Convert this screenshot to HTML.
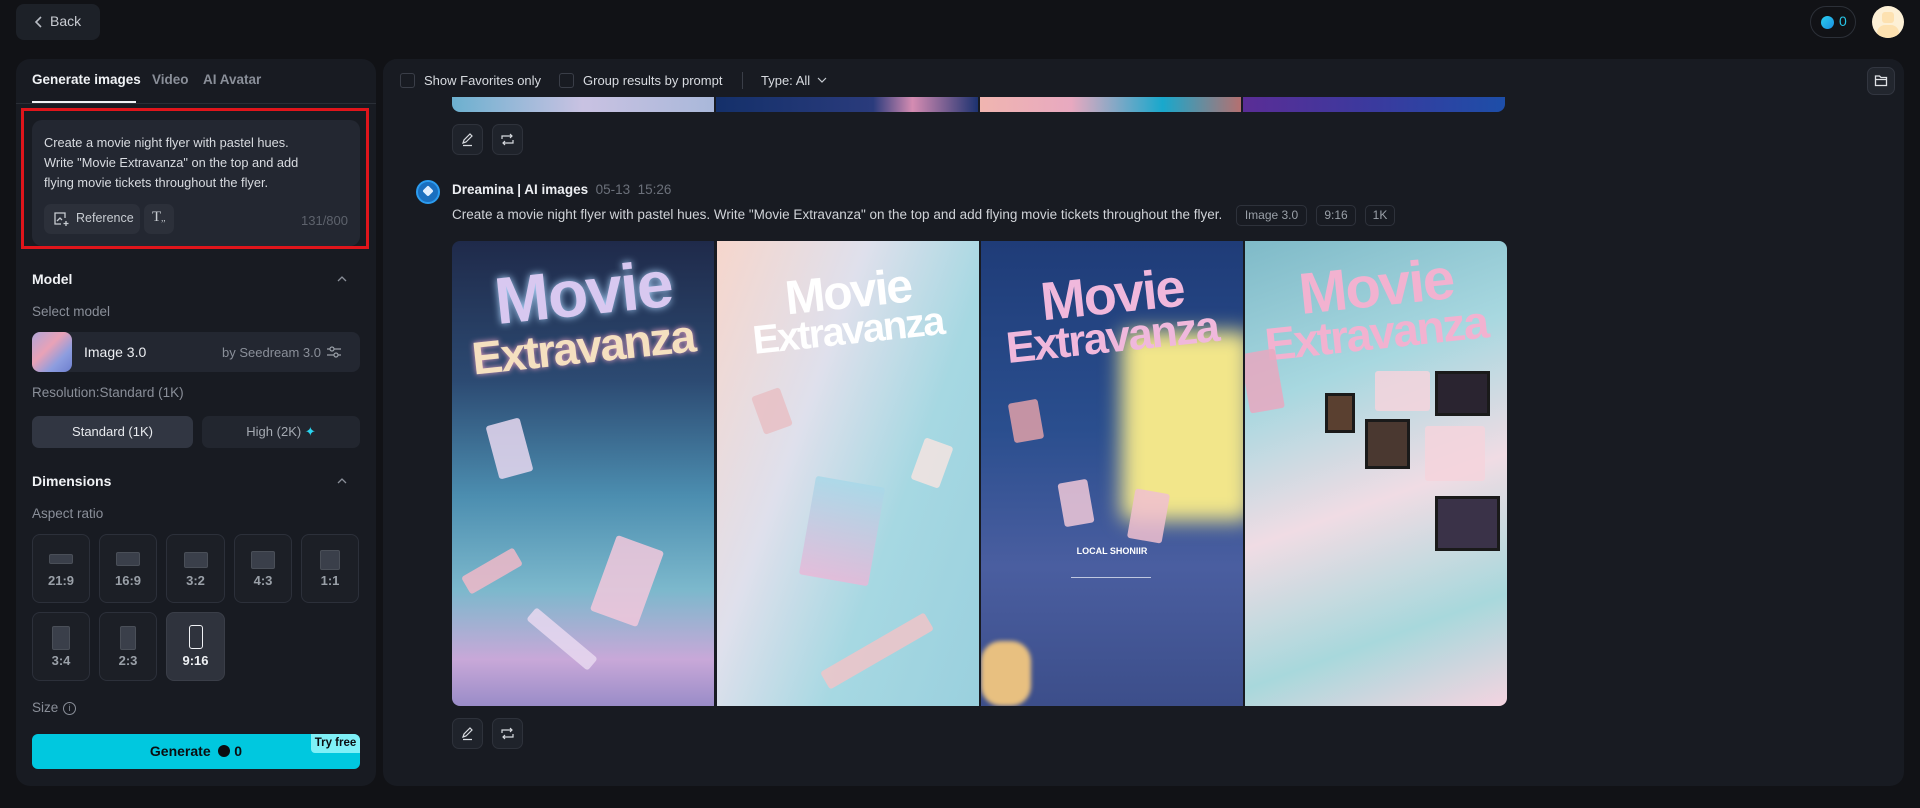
<!DOCTYPE html>
<html><head><meta charset="utf-8"><style>
*{box-sizing:border-box;margin:0;padding:0}
body{width:1920px;height:808px;background:#111216;font-family:"Liberation Sans",sans-serif;color:#e6e8ec;position:relative;overflow:hidden}
.a{position:absolute}
.panel{background:#181b22;border-radius:14px}
.t13{font-size:13.5px}
.gray{color:#8a8f99}
.btn{background:#242832;border-radius:7px}
.tile{position:absolute;width:58px;height:69px;border:1px solid #2c303a;border-radius:8px;background:#1c1f26;text-align:center;font-size:13px;font-weight:bold;color:#9aa0a8}
.tile i{position:absolute;left:50%;transform:translateX(-50%);background:#3a3f4a;border-radius:2px;border:1px solid #4a4f58}
.tile span{position:absolute;left:0;right:0;top:38px}
.img{position:absolute;top:241px;height:465px;width:262px;overflow:hidden}
.img b{position:absolute;left:0;right:0;text-align:center;font-weight:900;line-height:.9;transform:rotate(-6deg);font-family:"Liberation Sans",sans-serif;letter-spacing:-2px}
.tk{position:absolute;width:38px;height:24px;border-radius:3px;opacity:.85}
</style></head><body>
<div class="a btn" style="left:16px;top:4px;width:84px;height:36px;background:#1d2128;border-radius:8px"></div>
<svg class="a" style="left:34px;top:16px" width="10" height="12" viewBox="0 0 10 12"><path d="M7 1 2 6l5 5" stroke="#b8bcc4" stroke-width="1.6" fill="none"/></svg>
<div class="a" style="left:50px;top:13px;font-size:14px;color:#c9ccd2">Back</div>
<div class="a" style="left:1810px;top:6px;width:46px;height:32px;border:1px solid #2c3038;border-radius:16px"></div>
<div class="a" style="left:1821px;top:16px;width:13px;height:13px;border-radius:50%;background:linear-gradient(135deg,#2bd0f0,#1a8ee0)"></div>
<div class="a" style="left:1839px;top:13px;font-size:14px;color:#27c6e8">0</div>
<div class="a" style="left:1872px;top:6px;width:32px;height:32px;border-radius:50%;background:#fdf0d6;overflow:hidden"><div style="position:absolute;left:10px;top:6px;width:12px;height:11px;background:#fde1b0;border-radius:3px"></div><div style="position:absolute;left:5px;top:19px;width:22px;height:14px;background:#fde1b0;border-radius:8px 8px 0 0"></div></div>

<div class="a panel" style="left:16px;top:59px;width:360px;height:727px"></div>
<div class="a" style="left:32px;top:72px;font-size:13.5px;font-weight:bold;color:#f0f2f5">Generate images</div>
<div class="a" style="left:152px;top:72px;font-size:13.5px;font-weight:bold;color:#8a8f99">Video</div>
<div class="a" style="left:203px;top:72px;font-size:13.5px;font-weight:bold;color:#8a8f99">AI Avatar</div>
<div class="a" style="left:16px;top:103px;width:360px;height:1px;background:#2a2e36"></div>
<div class="a" style="left:32px;top:101px;width:104px;height:2px;background:#f0f2f5"></div>
<div class="a" style="left:21px;top:108px;width:348px;height:141px;border:3px solid #e0151b"></div>
<div class="a" style="left:32px;top:120px;width:328px;height:126px;background:#232731;border-radius:10px"></div>
<div class="a" style="left:44px;top:133px;line-height:20px;color:#d8dbe0;font-size:12.8px;white-space:nowrap">Create a movie night flyer with pastel hues.<br>Write "Movie Extravanza" on the top and add<br>flying movie tickets throughout the flyer.</div>
<div class="a" style="left:44px;top:204px;width:96px;height:30px;background:#2c303a;border-radius:7px"></div>
<svg class="a" style="left:53px;top:211px" width="16" height="16" viewBox="0 0 16 16"><path d="M12 7V2H2v11h6M4 10l3-3 2 2" stroke="#c8ccd2" stroke-width="1.3" fill="none"/><path d="M13 10v5M10.5 12.5h5" stroke="#c8ccd2" stroke-width="1.3"/></svg>
<div class="a" style="left:76px;top:211px;font-size:12.5px;color:#c8ccd2">Reference</div>
<div class="a" style="left:144px;top:204px;width:30px;height:30px;background:#2c303a;border-radius:7px"></div>
<div class="a" style="left:152px;top:209px;font-size:15px;color:#c8ccd2;font-family:'Liberation Serif',serif">T<span style="font-size:9px">,,</span></div>
<div class="a" style="left:300px;top:213px;font-size:13px;color:#5d626c;width:48px;text-align:right">131/800</div>

<div class="a" style="left:32px;top:271px;font-size:14px;font-weight:bold;color:#f0f2f5">Model</div>
<svg class="a" style="left:336px;top:275px" width="12" height="8"><path d="M2 6l4-4 4 4" stroke="#8a8f99" stroke-width="1.3" fill="none"/></svg>
<div class="a t13 gray" style="left:32px;top:304px">Select model</div>
<div class="a" style="left:32px;top:332px;width:328px;height:40px;background:#232731;border-radius:8px"></div>
<div class="a" style="left:32px;top:332px;width:40px;height:40px;border-radius:8px;background:linear-gradient(135deg,#b0a6d8,#e9a2b7 40%,#8d9ddf 70%,#6d7fcf)"></div>
<div class="a" style="left:84px;top:344px;font-size:14px;color:#eceef2">Image 3.0</div>
<div class="a gray" style="left:222px;top:345px;font-size:13px">by Seedream 3.0</div>
<svg class="a" style="left:326px;top:344px" width="16" height="16" viewBox="0 0 16 16"><path d="M1 5h14M1 11h14" stroke="#9aa0a8" stroke-width="1.2"/><circle cx="6" cy="5" r="2" fill="#232731" stroke="#9aa0a8" stroke-width="1.2"/><circle cx="10" cy="11" r="2" fill="#232731" stroke="#9aa0a8" stroke-width="1.2"/></svg>
<div class="a t13 gray" style="left:32px;top:385px">Resolution:Standard (1K)</div>
<div class="a" style="left:32px;top:416px;width:161px;height:32px;background:#313642;border-radius:7px;text-align:center;line-height:32px;font-size:13px;color:#e8eaee">Standard (1K)</div>
<div class="a" style="left:202px;top:416px;width:158px;height:32px;background:#22262f;border-radius:7px;text-align:center;line-height:32px;font-size:13px;color:#a5aab2">High (2K) <span style="color:#2ad4f0">✦</span></div>

<div class="a" style="left:32px;top:473px;font-size:14px;font-weight:bold;color:#f0f2f5">Dimensions</div>
<svg class="a" style="left:336px;top:477px" width="12" height="8"><path d="M2 6l4-4 4 4" stroke="#8a8f99" stroke-width="1.3" fill="none"/></svg>
<div class="a t13 gray" style="left:32px;top:506px">Aspect ratio</div>
<div class="tile" style="left:32px;top:534px"><i style="top:19px;width:24px;height:10px"></i><span>21:9</span></div>
<div class="tile" style="left:99px;top:534px"><i style="top:17px;width:24px;height:14px"></i><span>16:9</span></div>
<div class="tile" style="left:166px;top:534px;width:59px"><i style="top:17px;width:24px;height:16px"></i><span>3:2</span></div>
<div class="tile" style="left:234px;top:534px"><i style="top:16px;width:24px;height:18px"></i><span>4:3</span></div>
<div class="tile" style="left:301px;top:534px"><i style="top:15px;width:20px;height:20px"></i><span>1:1</span></div>
<div class="tile" style="left:32px;top:612px"><i style="top:13px;width:18px;height:24px"></i><span style="top:40px">3:4</span></div>
<div class="tile" style="left:99px;top:612px"><i style="top:13px;width:16px;height:24px"></i><span style="top:40px">2:3</span></div>
<div class="tile" style="left:166px;top:612px;width:59px;background:#2f333d;border-color:#3a3e48;color:#f0f2f5"><i style="top:12px;width:14px;height:24px;background:#2f333d;border:1.5px solid #f0f2f5;border-radius:3px"></i><span style="top:40px">9:16</span></div>
<div class="a t13 gray" style="left:32px;top:700px">Size</div>
<div class="a" style="left:63px;top:702px;width:13px;height:13px;border:1px solid #8a8f99;border-radius:50%;font-size:9px;text-align:center;line-height:11px;color:#8a8f99">i</div>
<div class="a" style="left:32px;top:734px;width:328px;height:35px;background:#00c8df;border-radius:6px;text-align:center;line-height:35px;font-size:14px;font-weight:bold;color:#0b0d10">Generate &nbsp;<span style="display:inline-block;width:12px;height:12px;border-radius:50%;background:#0b0d10;vertical-align:-1px"></span> 0</div>
<div class="a" style="left:311px;top:734px;width:49px;height:19px;background:#7ff0f7;border-radius:0 6px 0 4px;font-size:11.5px;font-weight:bold;color:#0b0d10;text-align:center;line-height:19px">Try free</div>

<div class="a panel" style="left:383px;top:59px;width:1521px;height:727px"></div>
<div class="a" style="left:452px;top:96px;width:1053px;height:16px;border-radius:0 0 8px 8px;overflow:hidden;display:flex;gap:2px">
<div style="flex:1;background:linear-gradient(90deg,#6cb0cf,#c9c2e2,#a9b8da)"></div><div style="flex:1;background:linear-gradient(90deg,#14306a,#2a3b7c 60%,#d58cb2 75%,#1c3270)"></div><div style="flex:1;background:linear-gradient(90deg,#f0b5b0,#e8a9c0,#18a8cc 70%,#b57070)"></div><div style="flex:1;background:linear-gradient(90deg,#5a2d96,#3a3a9e,#1d4ea8)"></div></div>
<div class="a" style="left:383px;top:59px;width:1521px;height:38px;background:#181b22;border-radius:14px 14px 0 0"></div>
<div class="a" style="left:400px;top:73px;width:15px;height:15px;border:1px solid #3a3e48;border-radius:3px"></div>
<div class="a" style="left:424px;top:73px;color:#d8dbe0;font-size:13px">Show Favorites only</div>
<div class="a" style="left:559px;top:73px;width:15px;height:15px;border:1px solid #3a3e48;border-radius:3px"></div>
<div class="a" style="left:583px;top:73px;color:#d8dbe0;font-size:13px">Group results by prompt</div>
<div class="a" style="left:742px;top:72px;width:1px;height:17px;background:#3a3e48"></div>
<div class="a" style="left:761px;top:73px;color:#d8dbe0;font-size:13px">Type: All</div>
<svg class="a" style="left:817px;top:77px" width="10" height="7"><path d="M1 1l4 4 4-4" stroke="#c8ccd2" stroke-width="1.2" fill="none"/></svg>
<div class="a" style="left:1867px;top:67px;width:28px;height:28px;border:1px solid #323640;background:#22262e;border-radius:7px"></div>
<svg class="a" style="left:1874px;top:74px" width="14" height="13" viewBox="0 0 14 13"><path d="M1.5 2h4l1.5 1.5h5.5v8h-11z M1.5 5.5h11" stroke="#e0e2e6" stroke-width="1.3" fill="none"/></svg>

<div class="a" style="left:452px;top:124px;width:31px;height:31px;border:1px solid #2e323b;background:#1f232b;border-radius:7px"></div>
<svg class="a" style="left:460px;top:132px" width="15" height="15" viewBox="0 0 15 15"><path d="M3 11l1-3 6-6 2 2-6 6z M3 13.5h9" stroke="#d8dbe0" stroke-width="1.2" fill="none"/></svg>
<div class="a" style="left:492px;top:124px;width:31px;height:31px;border:1px solid #2e323b;background:#1f232b;border-radius:7px"></div>
<svg class="a" style="left:500px;top:132px" width="15" height="15" viewBox="0 0 15 15"><path d="M2 7V4h10M10 2l2 2-2 2M13 8v3H3M5 13l-2-2 2-2" stroke="#d8dbe0" stroke-width="1.2" fill="none"/></svg>

<div class="a" style="left:416px;top:180px;width:24px;height:24px;border-radius:50%;background:#1a6fbf;border:2px solid #2b9cf0"></div>
<div class="a" style="left:423px;top:186px;width:10px;height:10px;background:#dfeeff;transform:rotate(45deg) scale(.8);border-radius:2px"></div>
<div class="a" style="left:452px;top:182px;font-size:13.5px;font-weight:bold;color:#eceef2">Dreamina | AI images <span style="font-weight:normal;color:#6b707a">&nbsp;05-13 &nbsp;15:26</span></div>
<div class="a" style="left:452px;top:207px;font-size:13.5px;color:#d0d3d8;white-space:nowrap">Create a movie night flyer with pastel hues. Write "Movie Extravanza" on the top and add flying movie tickets throughout the flyer.</div>
<div class="a" style="left:1236px;top:205px;width:71px;height:21px;border:1px solid #2e323b;border-radius:5px;font-size:12px;color:#9aa0a8;text-align:center;line-height:19px">Image 3.0</div>
<div class="a" style="left:1316px;top:205px;width:40px;height:21px;border:1px solid #2e323b;border-radius:5px;font-size:12px;color:#9aa0a8;text-align:center;line-height:19px">9:16</div>
<div class="a" style="left:1365px;top:205px;width:30px;height:21px;border:1px solid #2e323b;border-radius:5px;font-size:12px;color:#9aa0a8;text-align:center;line-height:19px">1K</div>

<div class="img" style="left:452px;border-radius:8px 0 0 8px;background:linear-gradient(180deg,#1f2a4a 0%,#2c4a72 30%,#4c8eb0 55%,#7cb8cc 75%,#c8a8d8 90%,#9a8cc8 100%)">
<b style="top:22px;font-size:66px;color:#d8c8f0;text-shadow:0 0 8px #b0d8ff">Movie</b><b style="top:86px;font-size:46px;color:#f5e0c0;text-shadow:0 0 6px #e8a0c0">Extravanza</b>
<div class="tk" style="left:150px;top:300px;width:50px;height:80px;background:#f2c8dc;transform:rotate(20deg)"></div>
<div class="tk" style="left:40px;top:180px;width:35px;height:55px;background:#e8d8f0;transform:rotate(-15deg)"></div>
<div class="tk" style="left:10px;top:320px;width:60px;height:20px;background:#f0b8c8;transform:rotate(-30deg)"></div>
<div class="tk" style="left:70px;top:390px;width:80px;height:16px;background:#e8d8f0;transform:rotate(40deg)"></div>
</div>
<div class="img" style="left:717px;background:linear-gradient(110deg,#f6d6cc 0%,#dfe0ec 35%,#a6d8e2 65%,#9ad0de 100%)">
<b style="top:30px;font-size:48px;color:#fff">Movie</b><b style="top:72px;font-size:40px;color:#fff">Extravanza</b>
<div class="tk" style="left:90px;top:240px;width:70px;height:100px;background:linear-gradient(180deg,#a8d8e8,#e8b8d8);transform:rotate(10deg)"></div>
<div class="tk" style="left:40px;top:150px;width:30px;height:40px;background:#e8c0c4;transform:rotate(-20deg)"></div>
<div class="tk" style="left:200px;top:200px;width:30px;height:44px;background:#f4e4e0;transform:rotate(20deg)"></div>
<div class="tk" style="left:100px;top:400px;width:120px;height:20px;background:#f0c4c8;transform:rotate(-30deg)"></div>
</div>
<div class="img" style="left:981px;background:linear-gradient(180deg,#1f3c78 0%,#2a4e8e 40%,#4a5ea0 70%,#3c4e8a 100%)">
<div style="position:absolute;left:140px;top:90px;width:130px;height:190px;background:#f2e68a;filter:blur(10px);border-radius:10px"></div>
<b style="top:30px;font-size:54px;color:#f0b8dc">Movie</b><b style="top:77px;font-size:44px;color:#f0b8dc">Extravanza</b>
<div class="tk" style="left:30px;top:160px;width:30px;height:40px;background:#e0a0a8;transform:rotate(-10deg)"></div>
<div class="tk" style="left:150px;top:250px;width:35px;height:50px;background:#f0c0d0;transform:rotate(10deg)"></div>
<div class="tk" style="left:80px;top:240px;width:30px;height:44px;background:#f0c8d8;transform:rotate(-10deg)"></div>
<div style="position:absolute;left:0;top:400px;width:50px;height:65px;background:#e8c080;border-radius:20px;filter:blur(2px)"></div>
<div style="position:absolute;left:0;right:0;top:305px;text-align:center;font-size:9px;font-weight:bold;color:#fff">LOCAL SHONIIR</div>
<div style="position:absolute;left:90px;top:336px;width:80px;height:1px;background:#c0c8e0"></div>
</div>
<div class="img" style="left:1245px;border-radius:0 8px 8px 0;background:linear-gradient(160deg,#7fbac8 0%,#a8d8e0 30%,#f0dce4 55%,#a8d8dc 80%,#f4d4e0 100%)">
<b style="top:20px;font-size:58px;color:#f2b2d0">Movie</b><b style="top:72px;font-size:46px;color:#f2b2d0">Extravanza</b>
<div style="position:absolute;left:190px;top:130px;width:55px;height:45px;background:#2a2430;border:3px solid #1a1a1a"></div>
<div style="position:absolute;left:190px;top:255px;width:65px;height:55px;background:#3a3248;border:3px solid #1a1a1a"></div>
<div style="position:absolute;left:120px;top:178px;width:45px;height:50px;background:#4a3830;border:3px solid #1a1a1a"></div>
<div style="position:absolute;left:80px;top:152px;width:30px;height:40px;background:#5a4030;border:3px solid #1a1a1a"></div>
<div class="tk" style="left:130px;top:130px;width:55px;height:40px;background:#f5d4dc"></div>
<div class="tk" style="left:180px;top:185px;width:60px;height:55px;background:#f5d4dc"></div>
<div class="tk" style="left:0px;top:110px;width:35px;height:60px;background:#e8a8c0;transform:rotate(-10deg)"></div>
</div>

<div class="a" style="left:452px;top:718px;width:31px;height:31px;border:1px solid #2e323b;background:#1f232b;border-radius:7px"></div>
<svg class="a" style="left:460px;top:726px" width="15" height="15" viewBox="0 0 15 15"><path d="M3 11l1-3 6-6 2 2-6 6z M3 13.5h9" stroke="#d8dbe0" stroke-width="1.2" fill="none"/></svg>
<div class="a" style="left:492px;top:718px;width:31px;height:31px;border:1px solid #2e323b;background:#1f232b;border-radius:7px"></div>
<svg class="a" style="left:500px;top:726px" width="15" height="15" viewBox="0 0 15 15"><path d="M2 7V4h10M10 2l2 2-2 2M13 8v3H3M5 13l-2-2 2-2" stroke="#d8dbe0" stroke-width="1.2" fill="none"/></svg>
</body></html>
